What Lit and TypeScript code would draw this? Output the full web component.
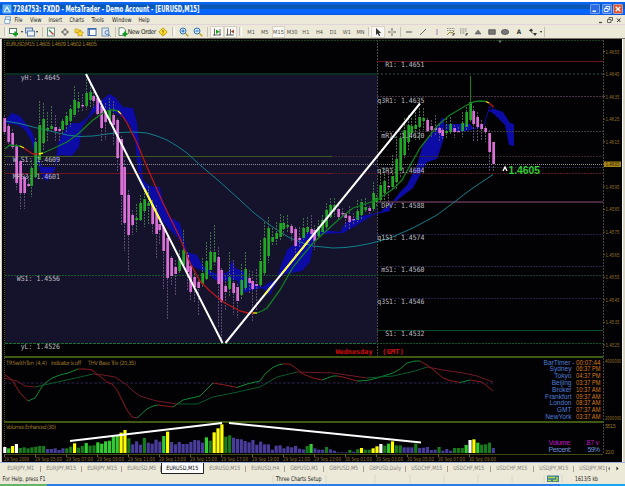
import { html, css, svg, LitElement } from 'lit';
import { customElement, property } from 'lit/decorators.js';

const STEP = 3.877;
const barX = (i: number) => 4.8 + i * STEP;

// high, body top, body bottom, low, 1 = up
const CANDLES: number[][] = [
  [115, 118, 132, 135, 0], [124, 126, 142, 146, 0], [129, 133, 147, 150, 0], [144, 146, 183, 190, 0],
  [160, 161, 193, 209, 0], [175, 177, 193, 209, 0], [176, 184, 186, 188, 0], [160, 168, 186, 197, 1],
  [138, 142, 177, 178, 1], [101, 125, 160, 166, 1], [103, 119, 143, 150, 1], [112, 128, 130, 141, 1],
  [106, 126, 129, 133, 1], [115, 127, 131, 142, 0], [127, 129, 131, 142, 0], [119, 121, 130, 133, 1],
  [112, 116, 125, 133, 1], [105, 109, 121, 127, 1], [86, 100, 115, 117, 1], [92, 102, 108, 112, 1],
  [94, 105, 106, 112, 0], [79, 93, 106, 110, 1], [84, 92, 100, 107, 1], [92, 96, 101, 108, 0],
  [95, 98, 114, 118, 0], [100, 106, 128, 141, 0], [103, 112, 122, 140, 0], [98, 110, 120, 124, 1],
  [101, 115, 125, 146, 0], [118, 120, 158, 171, 0], [136, 139, 195, 225, 0], [160, 167, 223, 251, 0],
  [190, 195, 235, 272, 0], [210, 215, 225, 235, 0], [204, 218, 220, 232, 1], [195, 203, 220, 222, 1],
  [187, 199, 211, 227, 1], [186, 203, 206, 224, 1], [200, 205, 224, 234, 0], [205, 213, 234, 259, 0],
  [218, 224, 230, 245, 0], [225, 227, 251, 289, 0], [236, 238, 278, 320, 0], [256, 258, 276, 285, 0],
  [260, 267, 274, 295, 0], [250, 258, 271, 273, 1], [230, 250, 265, 268, 1], [252, 255, 272, 290, 0],
  [262, 266, 292, 301, 0], [270, 277, 287, 303, 0], [277, 282, 288, 316, 0], [258, 273, 284, 288, 1],
  [242, 261, 279, 281, 1], [232, 252, 270, 273, 1], [225, 252, 262, 265, 1], [247, 257, 284, 327, 0],
  [268, 270, 302, 343, 0], [275, 286, 292, 310, 0], [252, 277, 289, 297, 1], [260, 283, 293, 315, 0],
  [284, 287, 301, 318, 0], [264, 280, 295, 300, 1], [252, 269, 288, 290, 1], [270, 278, 283, 293, 0],
  [271, 281, 289, 321, 0], [269, 284, 286, 311, 0], [240, 261, 285, 287, 1], [222, 238, 273, 275, 1],
  [217, 228, 256, 263, 1], [228, 237, 242, 246, 1], [222, 233, 239, 245, 1], [214, 223, 237, 240, 1],
  [216, 223, 229, 237, 1], [215, 225, 227, 232, 1], [224, 226, 233, 241, 0], [227, 229, 246, 260, 0],
  [227, 238, 240, 248, 0], [218, 228, 238, 240, 1], [217, 227, 232, 235, 1], [215, 229, 234, 237, 0],
  [225, 230, 241, 250, 0], [220, 226, 236, 238, 1], [215, 220, 232, 234, 1], [203, 210, 227, 229, 1],
  [198, 205, 217, 219, 1], [198, 205, 210, 217, 1], [205, 209, 217, 219, 0], [208, 213, 214, 217, 0],
  [213, 213, 218, 227, 0], [206, 216, 222, 230, 0], [213, 219, 220, 225, 0], [200, 211, 220, 222, 1],
  [199, 202, 215, 219, 1], [198, 207, 210, 213, 1], [206, 208, 211, 214, 0], [182, 193, 209, 211, 1],
  [195, 198, 202, 206, 1], [170, 185, 200, 202, 1], [168, 181, 193, 203, 1], [170, 186, 187, 205, 0],
  [155, 176, 187, 190, 1], [136, 159, 182, 190, 1], [133, 138, 171, 178, 1], [118, 130, 155, 158, 1],
  [115, 125, 142, 150, 1], [118, 126, 133, 138, 1], [112, 125, 129, 140, 1], [108, 117, 127, 140, 1],
  [108, 118, 121, 130, 1], [118, 120, 131, 133, 0], [120, 126, 130, 138, 0], [115, 128, 130, 135, 0],
  [124, 128, 133, 142, 0], [128, 130, 136, 140, 0], [118, 131, 133, 139, 1], [117, 124, 132, 135, 1],
  [125, 128, 132, 138, 0], [127, 131, 132, 133, 0], [112, 123, 131, 137, 1], [107, 112, 127, 130, 1],
  [76, 102, 120, 122, 1], [106, 111, 124, 142, 0], [112, 117, 127, 141, 0], [120, 124, 129, 140, 0],
  [126, 128, 132, 142, 0], [130, 133, 152, 171, 0], [142, 142, 164, 172, 0],
];

// height in thirds of a pixel followed by the colour key
const VOLUMES = (
  '18w 14l 21y 27w 15d 17d 14d 17d 19d 21d 21d 12b 12b 14b 9b 14b 14d 19d 29y 16d 21d 30l 22d 23d 32l 28l ' +
  '35l 37l 50l 53l 61y 69y 44d 26b 35b 25b 45d 31b 28b 40b 34b 51l 64y 33b 26b 33b 27b 27b 33b 39b 38b ' +
  '31b 47l 37d 62y 74y 86y 49d 53d 46b 42b 41b 36b 32b 39b 25b 34b 26b 26b 10b 22b 23b 14b 20b 17b 21b ' +
  '13b 11b 21d 27l 14b 10b 10b 18d 11b 7b 2b 2b 2b 9d 4b 11d 15y 10d 10d 14y 20y 27w 22d 28l 35y 23d ' +
  '23d 17b 17b 17b 28d 15b 16b 18b 9b 10b 18d 7b 12b 7b 15d 15d 15d 24l 39w 41y 31l 25d 26d 31d 15b'
).split(' ');

const VOL_COLORS: Record<string, string> = {
  w: '#ffffff', y: '#ffff00', l: '#32cd32', d: '#18791e', b: '#483d9b',
};

// y, colour, x1, x2, dash, width
const LEVELS: [number, string, number, number, string, number][] = [
  [74, '#0a2f20', 5, 377, '', 2],
  [74, '#1a3a36', 377, 603, '2 2', 1.4],
  [61.5, '#66141f', 377, 603, '', 1],
  [96.5, '#4b3448', 377, 603, '2 1', 1],
  [131.5, '#3e3a44', 377, 603, '2 1', 1],
  [156.5, '#3f5a1e', 5, 332, '', 1],
  [156.5, '#3b2a2c', 332, 603, '2 1', 1],
  [164.5, '#8d8b8e', 5, 603, '1 1', 1],
  [167.5, '#2a2444', 377, 603, '2 1', 1],
  [173.5, '#6e1722', 5, 332, '', 1],
  [173.5, '#5c1a22', 332, 603, '2 1', 1],
  [202, '#4a2740', 377, 603, '', 2],
  [234.5, '#25214a', 377, 603, '2 1', 1],
  [266.5, '#25284a', 377, 603, '2 1', 1],
  [275.5, '#145a28', 5, 377, '2 1', 1],
  [275.5, '#12402a', 377, 603, '2 1', 1],
  [298.5, '#25214a', 377, 603, '2 1', 1],
  [330.5, '#0f4a2c', 377, 603, '', 1],
  [343.5, '#147030', 5, 377, '3 1', 1],
  [343.5, '#125226', 377, 603, '2 1', 1],
];

const LABELS: [string, number, number][] = [
  ['yH: 1.4645', 60, 80], ['W S1: 1.4609', 60, 162], ['MPS3: 1.4601', 60, 179],
  ['WS1: 1.4556', 60, 281], ['yL: 1.4526', 60, 349],
  ['R1: 1.4651', 424.5, 67], ['q3R1: 1.4635', 424.5, 102.5], ['mR1: 1.4620', 424.5, 137.5],
  ['q1R1: 1.4604', 424.5, 173], ['DPV: 1.4588', 424.5, 208], ['q1S1: 1.4574', 424.5, 240],
  ['mS1: 1.4560', 424.5, 272], ['q3S1: 1.4546', 424.5, 304], ['S1: 1.4532', 424.5, 336],
];

const CLOUDS = [
  '5,123 8,117 12,113 20,116 27,125 32,132 36,143 39,160 42,167 55,167 55,170 47,181 43,178 37,162 31,140 25,130 18,125',
  '55,167 58,143 63,133 70,123 80,123 88,117 93,107 102,100 109,94 115,97 123,107 133,108 137,123 140,153 143,180 150,186 160,187 163,200 170,217 180,223 187,252 197,255 203,266 212,272 220,275 228,272 232,260 235,268 245,272 250,282 262,287 270,282 277,280 280,268 287,250 297,242 307,232 315,233 323,230 340,232 345,223 357,217 377,213 390,208 390,211 373,215 357,225 343,233 323,234 315,237 310,262 302,271 280,275 270,295 262,288 253,290 243,293 237,280 227,281 215,280 207,273 190,265 180,240 167,227 157,213 150,200 145,193 138,170 135,140 130,125 122,117 113,112 103,108 95,112 87,120 82,127 79,147 72,156 60,155',
  '380,211 390,205 400,192 407,185 417,165 423,145 437,127 442,118 444,118 444,138 437,159 427,162 420,175 413,188 400,198 387,210',
  '445,124 470,124 474,129 463,132 445,130',
  '489,110 495,109 503,112 510,123 514,124 514,146 509,145 505,125 497,117',
];

const MA: [string, string][] = [
  ['#128020', '5,149 10,145 20,146'],
  ['#ffee00', '20,146 24,148'],
  ['#b81818', '24,148 28,151 33,154 39,154'],
  ['#ffee00', '39,154 43,153'],
  ['#128020', '43,153 50,150 67,142 78,134 93,120 103,113 110,110 114,110 118,111'],
  ['#ffee00', '118,111 121,114'],
  ['#b81818', '121,114 127,123 137,143 147,167 163,203 180,238 190,263 200,281 210,291 223,302 240,311 248,313 253,313'],
  ['#ffee00', '253,313 257,313'],
  ['#128020', '257,313 262,311 267,308 280,290 293,267 313,243 337,221 353,208 365,204 377,200 393,189 402,180 407,171 420,148 437,126 450,115 467,105 475,101.5 481,101 486,101.5'],
  ['#ffee00', '486,101.5 489,103'],
  ['#b81818', '489,103 493.5,107'],
];

const SLOW_MA = '5,121 20,123.5 33,127 50,131 67,135 80,136.5 93,136 107,134 120,132.5 133,132 147,133 157,136 167,140 ' +
  '177,146 187,153 200,165 220,182 240,200 253,212 267,223 280,232 290,238 303,243 313,246 323,247 333,248 345,247.5 ' +
  '357,246 370,243.5 390,238 413,228 437,215 457,200 470,190 493,174.5';

const OSC: [string, string][] = [
  ['#8f1a1e', '4,374 12,380 20,393 28,401'],
  ['#0f8a34', '28,401 35,398 43,385 52,378 60,375 68,373 78,369'],
  ['#8f1a1e', '78,369 85,369 92,370 107,382 112,384 117,390 127,410 132,417 137,418'],
  ['#0f8a34', '137,418 147,409 153,406 158,405'],
  ['#8f1a1e', '158,405 173,407'],
  ['#0f8a34', '173,407 183,400 200,396 207,389 213,383'],
  ['#8f1a1e', '213,383 225,385 237,387.5'],
  ['#0f8a34', '237,387.5 247,384 260,381 265,374 272,368 278,365 283,364'],
  ['#8f1a1e', '283,364 290,364 297,369 303,374 313,378 322,380'],
  ['#0f8a34', '322,380 333,376 337,376'],
  ['#8f1a1e', '337,376 343,377 350,379 357,381'],
  ['#0f8a34', '357,381 367,380.5 377,378 393,373 400,369 407,363 415,361 420,361'],
  ['#8f1a1e', '420,361 430,367 443,378 450,380.5 460,382.5'],
  ['#0f8a34', '460,382.5 470,380'],
  ['#8f1a1e', '470,380 482,382 487,386 493,391'],
  ['#701a28', '4,378 17,381 25,386 35,387'],
  ['#0b5a2c', '35,387 53,383 80,377 93,374'],
  ['#701a28', '93,374 103,375 115,377 127,385 133,391 140,396 148,398.5 157,401 177,404'],
  ['#0b5a2c', '177,404 197,404 213,397 233,393 260,387 277,377 297,372'],
  ['#701a28', '297,372 333,373 350,375.5 367,378'],
  ['#0b5a2c', '367,378 393,376 415,371 427,367'],
  ['#701a28', '427,367 443,370 463,373 477,376 493,382'],
];

const CLOCKS = [
  ['BarTimer -', '00:07:44'], ['Sydney', '06:37 PM'], ['Tokyo', '04:37 PM'], ['Beijing', '03:37 PM'],
  ['Broker', '10:37 AM'], ['Frankfurt', '09:37 AM'], ['London', '08:37 AM'], ['GMT', '07:37 AM'],
  ['NewYork', '03:37 AM'],
];

const TIMES = [
  '29 Sep 2009', '29 Sep 05:00', '29 Sep 07:00', '29 Sep 09:00', '29 Sep 11:00', '29 Sep 13:00',
  '29 Sep 15:00', '29 Sep 17:00', '29 Sep 19:00', '29 Sep 21:00', '29 Sep 23:00', '30 Sep 01:00',
  '30 Sep 03:00', '30 Sep 05:00', '30 Sep 07:00', '30 Sep 09:00',
];

// label, cell width, text width
const TABS: [string, number, number][] = [
  ['EURJPY,M1', 39, 27], ['EURJPY,M15', 41, 30], ['EURJPY,M15', 40, 30], ['EURUSD,M5', 39, 29],
  ['EURUSD,M15', 43, 32], ['EURUSD,M15', 42, 31], ['EURUSD,H4', 39, 28], ['GBPUSD,M1', 39, 28],
  ['GBPUSD,M5', 40, 29], ['GBPUSD,Daily', 42, 32], ['USDCHF,M15', 42, 31], ['USDCHF,M15', 43, 31],
  ['USDCHF,M15', 43, 31], ['USDJPY,M15', 40, 29], ['USDJPY,M1', 33, 26],
];

const ICONS: Record<string, unknown> = {
  newchart: svg`<rect x=".5" y="1.5" width="7" height="5" fill="#fff" stroke="#5d7f6a"/><path d="M4 7h5M6.500 4.500v5" stroke="#0d9c20" stroke-width="2.200"/>`,
  profiles: svg`<rect x=".5" y="1" width="7" height="5" fill="#cfe0f2" stroke="#5a7ba8"/><rect x="2.500" y="4" width="7" height="5" fill="#eef5fc" stroke="#5a7ba8"/>`,
  market: svg`<rect x="1.500" y="1" width="7" height="8" fill="#fff" stroke="#6a8f88"/><path d="M3 3l2 2" stroke="#0a9a3a" stroke-width="1.500"/><path d="M5 5l2.500 2.500" stroke="#d03a2a" stroke-width="1.500"/>`,
  data: svg`<circle cx="5" cy="5" r="2.500" fill="none" stroke="#777"/><path d="M5 1v3M5 6v3M1 5h3M6 5h3" stroke="#666"/>`,
  navigator: svg`<path d="M1 2h3l1 1h2v3H1z" fill="#f4cf3a" stroke="#c39a1a" stroke-width=".6"/><path d="M6 3l1.200 2 2.300.3-1.600 1.700.4 2.200L6 8.200 4 9.200l.4-2.200L3 5.500l2.200-.4z" fill="#ffd92e" stroke="#b98b10" stroke-width=".6"/>`,
  terminal: svg`<rect x="1" y="1.500" width="8" height="7" fill="#fff" stroke="#3e6cae"/><path d="M1 2h8M2.300 2v6" stroke="#3e6cae" stroke-width="1.300"/>`,
  tester: svg`<rect x="1" y="1" width="6.500" height="8" fill="#dfe9f5" stroke="#7b94b8"/><circle cx="6" cy="5.500" r="2" fill="#cfe4fa" stroke="#4a73aa" stroke-width=".8"/><path d="M7.500 7l2 2.500" stroke="#4a73aa"/>`,
  order: svg`<path d="M1 .8h4.500L7.500 3v5.500H1z" fill="#fff" stroke="#6a8a74"/><path d="M4.500 7h5M7 4.500v5" stroke="#0d9c20" stroke-width="2.200"/>`,
  expert: svg`<path d="M5 .8L9.200 5 5 9.200.8 5z" fill="#ffe02a" stroke="#b08b00" stroke-width=".8"/><path d="M5 3v2.500M5 6.500v1" stroke="#6a5200"/>`,
  zoomin: svg`<circle cx="4" cy="4" r="3" fill="#d5eafc" stroke="#2e73bd"/><path d="M2.500 4h3M4 2.500v3" stroke="#1a5fb0"/><path d="M6.300 6.300l3 3" stroke="#c2a321" stroke-width="1.600"/>`,
  zoomout: svg`<circle cx="4" cy="4" r="3" fill="#d5eafc" stroke="#2e73bd"/><path d="M2.500 4h3" stroke="#1a5fb0"/><path d="M6.300 6.300l3 3" stroke="#c2a321" stroke-width="1.600"/>`,
  scroll: svg`<path d="M2.500 1.500v7M1 8h8M8 2v6" stroke="#555" stroke-width=".9"/><path d="M4 2.500L7.500 4.800 4 7z" fill="#0fa01e"/>`,
  shift: svg`<path d="M2.500 1.500v7M1 8h8M5.500 2v6" stroke="#555" stroke-width=".9"/><path d="M9 2.500L6 4.500 9 6.500z" fill="#a5422d"/>`,
  cursor: svg`<path d="M3 1v7l1.700-1.500L6 9.200l1.200-.6L6 6h2.200z" fill="#333"/>`,
  cross: svg`<path d="M5 1v3.200M5 5.800V9M1 5h3.200M5.800 5H9" stroke="#666"/>`,
  hline: svg`<path d="M2 5h6" stroke="#555"/>`,
  trend: svg`<path d="M2 8l6-6" stroke="#666"/>`,
  vline: svg`<path d="M5 2v6" stroke="#a080b4"/>`,
  fibo: svg`<path d="M1 1.500h8M1 3.500h8" stroke="#777" stroke-dasharray="1 .6" stroke-width=".8"/><path d="M1 8l3-3 2 1 2-2" stroke="#8d8430" fill="none"/><path d="M7 9V6.500h2M7 7.700h1.500" stroke="#444" fill="none" stroke-width=".8"/>`,
  levels: svg`<path d="M1 2h7M1 4h7M1 6h5" stroke="#777" stroke-dasharray="1 .6" stroke-width=".9"/><path d="M7 9V6.500h2M7 7.700h1.500" stroke="#444" fill="none" stroke-width=".8"/>`,
  triangle: svg`<path d="M5 3L8 7H2z" fill="#777" stroke="#555" stroke-width=".6"/>`,
  rect: svg`<rect x="1.800" y="2.800" width="6.400" height="4.400" fill="#777" stroke="#4c4c4c" stroke-width=".8"/>`,
  ellipse: svg`<ellipse cx="5" cy="5" rx="3.700" ry="2.500" fill="#777" stroke="#4c4c4c" stroke-width=".8"/>`,
  arrows: svg`<path d="M1 3.500L3.200 1.500 5 3.500 3.200 5z" fill="#333"/><path d="M5 6h4L7 9z" fill="#333"/><path d="M3 5l3 2" stroke="#777"/>`,
};

@customElement('tool-icon')
class ToolIcon extends LitElement {
  static styles = css`
    :host { display: flex; justify-content: center; align-items: center; height: 12px; }
    svg { display: block; width: 10px; height: 10px; }
  `;

  @property() name = '';

  render() {
    return html`<svg viewBox="0 0 10 10" fill="none">${ICONS[this.name]}</svg>`;
  }
}

@customElement('tool-bar')
class ToolBar extends LitElement {
  static styles = css`
    :host {
      display: flex;
      align-items: center;
      height: 14px;
      padding-left: 4px;
      box-sizing: border-box;
      background: #ece9d8;
      border-top: 1px solid #e2d3da;
      font: 6.3px "DejaVu Sans Condensed", "DejaVu Sans", sans-serif;
      color: #333;
    }
    .cell { display: flex; flex: none; width: 13.7px; justify-content: center; align-items: center; height: 12px; }
    .group { display: flex; flex: none; align-items: center; }
    .grip { flex: none; width: 3px; height: 9px; border-left: 1px solid #cbbfc4; border-right: 1px solid #fff; box-sizing: border-box; }
    .sep { flex: none; width: 1px; height: 10px; background: #c6c0b2; }
    .before-market { margin: 0 1px 0 4px; }
    .before-order { margin-left: 2px; }
    .before-zoom { margin: 0 3px 0 2px; }
    .before-scroll { margin: 0 2px; }
    .before-lines { margin: 0 1.5px; }
    .drop { width: 0; height: 0; border: 1.5px solid transparent; border-top: 2px solid #222; border-bottom: 0; }
    .pressed { background: #f8f7f1; box-shadow: inset 0 0 0 1px #d8d2c6; }
    .frames { margin-left: 2px; width: 124px; }
    .tf { color: #55524c; font-size: 5.6px; }
    .order { display: flex; flex: none; width: 38px; align-items: center; margin-left: 2px; font-size: 6.5px; letter-spacing: -0.36px; white-space: nowrap; color: #222; }
  `;

  render() {
    const cell = (name: string, pressed = false) => html`
      <div class="cell ${pressed ? 'pressed' : ''}"><tool-icon name=${name}></tool-icon></div>`;
    return html`
      <div class="grip"></div>
      <div class="group">${cell('newchart')}<i class="drop"></i></div>
      <div class="group">${cell('profiles')}<i class="drop"></i></div>
      <div class="sep before-market"></div>
      ${['market', 'data', 'navigator', 'terminal', 'tester'].map(n => cell(n))}
      <div class="sep before-order"></div>
      <div class="order"><tool-icon name="order"></tool-icon><span>New Order</span></div>
      ${cell('expert')}
      <div class="grip before-zoom"></div>
      ${cell('zoomin')}${cell('zoomout')}
      <div class="sep before-scroll"></div>
      ${cell('scroll', true)}${cell('shift', true)}
      <div class="grip before-order"></div>
      <div class="group frames">
        ${['M1', 'M5', 'M15', 'M30', 'H1', 'H4', 'D1', 'W1', 'MN'].map(t => html`
          <div class="cell tf ${t === 'M15' ? 'pressed' : ''}">${t}</div>`)}
      </div>
      <div class="grip"></div>
      ${cell('cursor', true)}${cell('cross')}
      <div class="sep before-lines"></div>
      ${['hline', 'trend', 'vline', 'fibo', 'levels', 'triangle', 'rect', 'ellipse'].map(n => cell(n))}
      <div class="cell"><b>A</b></div>
      ${cell('arrows')}<i class="drop"></i>
      <div class="sep before-order"></div>
    `;
  }
}

@customElement('price-chart')
class PriceChart extends LitElement {
  static styles = css`
    :host { display: block; background: #020103; }
    svg { display: block; width: 620px; height: 424px; }
    .label { font: 7.2px "DejaVu Sans Mono", monospace; fill: #bdbcc2; text-anchor: end; }
    .axis { font: 5.6px "DejaVu Sans Condensed", sans-serif; fill: #95722a; }
    .current { fill: #2a2004; }
    .caption { font: 5.8px "DejaVu Sans Condensed", sans-serif; fill: #95742a; }
    .quote { font: bold 10px "Liberation Sans", sans-serif; fill: #32cd32; }
    .day { font: bold 6.9px "DejaVu Sans Mono", monospace; fill: #d40d0d; }
    .city { font: 6.6px "Liberation Sans", sans-serif; fill: #4d7fd8; text-anchor: end; }
    .clock { font: 6.8px "Liberation Sans", sans-serif; fill: #d97a18; }
    .volume { font: 7px "Liberation Sans", sans-serif; fill: #c214c2; }
    .percent { font: 7px "Liberation Sans", sans-serif; fill: #6a90d8; }
  `;

  _frame() {
    return svg`
      <rect x="5" y="74" width="372.500" height="269.500" fill="#15122b"/>
      <path d="M4.500 40V454" stroke="#5a4a16" stroke-dasharray="1 1"/>
      <path d="M377.500 40V356" stroke="#4a4750" stroke-dasharray="2 1"/>
      <path d="M4 40.500H603" stroke="#1e5a1c" stroke-dasharray="2 1" stroke-width=".7"/>
      <path d="M603.500 40V454" stroke="#4a4440" stroke-dasharray="2 1"/>
      ${[357, 422].map(y => svg`
        <path d="M4 ${y}H603" stroke="#5e480e" stroke-width="2"/>
        <path d="M4 ${y}H603" stroke="#1f6a18" stroke-width="2" stroke-dasharray="1 1"/>`)}
      <path d="M4 454.500H603" stroke="#3f4a14"/>
      <path d="M498 40.500h4l-2 2.500z" fill="#777"/>
    `;
  }

  _main() {
    return svg`
      ${CLOUDS.map(p => svg`<polygon points=${p} fill="#0d0ba6"/>`)}
      <polyline points="474,129 484,125 487,115 490,106 493,109 489,112" fill="none" stroke="#0d0ba6"/>
      ${LEVELS.map(([y, c, x1, x2, dash, w]) => svg`
        <line x1=${x1} x2=${x2} y1=${y} y2=${y} stroke=${c} stroke-width=${w} stroke-dasharray=${dash || 'none'}/>`)}
      <polyline points=${SLOW_MA} fill="none" stroke="#11808a"/>
      ${CANDLES.map(([hi, top, bottom, lo, up], i) => {
        const x = Math.round(barX(i) - 0.5);
        return svg`
          <line x1=${x + 0.5} x2=${x + 0.5} y1=${hi} y2=${lo} stroke=${i === 120 ? '#147d1a' : up ? '#3f7045' : '#5e4a70'} stroke-dasharray=${i === 120 ? 'none' : '2 1'}/>
          <rect x=${x - 0.7} y=${top} width="2.700" height=${Math.max(1.3, bottom - top)} fill=${up ? '#22a626' : '#da70d6'}/>`;
      })}
      ${MA.map(([c, p]) => svg`<polyline points=${p} fill="none" stroke=${c} stroke-width="1.300"/>`)}
      <path d="M86 74L222.500 343M225.500 343L420 103.500" stroke="#fff" stroke-width="2"/>
      <path d="M144.500 189L160 219.500M265 294.500L270.500 287.500M282 273.500L309 240" stroke="#ffff20" stroke-width="1.700"/>
      ${LABELS.map(([t, x, y]) => svg`
        <text class="label" x=${x} y=${y} textLength=${t.length * 3.93} lengthAdjust="spacingAndGlyphs">${t}</text>`)}
      <text class="caption" x="6" y="45.500" textLength="91">EURUSD,M15  1.4605 1.4609 1.4602 1.4605</text>
      <path d="M503 171L505 167L507 171" fill="none" stroke="#fff" stroke-width="1.400"/>
      <text class="quote" x="508.500" y="173.500" textLength="31.500" lengthAdjust="spacingAndGlyphs">1.4605</text>
      <text class="day" x="335.500" y="354" textLength="37" lengthAdjust="spacingAndGlyphs">Wednesday</text>
      <text class="day" x="382" y="354" textLength="22" lengthAdjust="spacingAndGlyphs">(GMT)</text>
    `;
  }

  _axis() {
    const rows = Array.from({ length: 14 }, (_, i) => ({
      y: 51.5 + i * 22.57,
      text: (1.4655 - i * 0.001).toFixed(4),
    }));
    return svg`
      ${rows.map((r, i) => svg`
        <path d="M603 ${r.y}h2" stroke="#6a5a30"/>
        ${i === 5 ? svg`<rect x="604" y="161.500" width="17" height="5.500" fill="#a8861a"/>` : ''}
        <text class="axis ${i === 5 ? 'current' : ''}" x="605.500" y=${r.y + 2} textLength="14" lengthAdjust="spacingAndGlyphs">${r.text}</text>`)}
      <text class="axis" x="605" y="363" textLength="16" lengthAdjust="spacingAndGlyphs">4000000</text>
      <text class="axis" x="605" y="420" textLength="16" lengthAdjust="spacingAndGlyphs">2000000</text>
      <text class="axis" x="605" y="427.500" textLength="11">551.5</text>
      <text class="axis" x="605" y="454" textLength="9">22.0</text>
    `;
  }

  _indicators() {
    return svg`
      <path d="M4 383H493" stroke="#29264c" stroke-dasharray="3 1.500"/>
      ${OSC.map(([c, p]) => svg`<polyline points=${p} fill="none" stroke=${c}/>`)}
      <text class="caption" x="6" y="364.500" textLength="41">TRSwithTen  (4,4)</text>
      <text class="caption" x="51" y="364.500" textLength="30">Indicator is off</text>
      <text class="caption" x="88" y="364.500" textLength="48">THV Base Trix  (20,35)</text>
      ${CLOCKS.map(([city, time], i) => svg`
        <text class="city" x=${i ? 571.5 : 574.5} y=${364.5 + i * 6.8}>${city}</text>
        <text class="clock" x="576" y=${364.5 + i * 6.8} textLength="24.500" lengthAdjust="spacingAndGlyphs">${time}</text>`)}
    `;
  }

  _volumes() {
    return svg`
      ${VOLUMES.map((v, i) => {
        const h = parseInt(v, 10) / 3;
        return svg`<rect x=${barX(i) - 1.6} y=${453 - h} width="3.200" height=${h} fill=${VOL_COLORS[v.slice(-1)]}/>`;
      })}
      <path d="M70 441L222 423M229 423L421 442.500" stroke="#fff" stroke-width="2"/>
      <text class="caption" x="6" y="429" textLength="50">Volumes Enhanced  (30)</text>
      <text class="volume" x="548.500" y="445" textLength="23">Volume:</text>
      <text class="volume" x="586.500" y="445" textLength="12.500">87 v</text>
      <text class="percent" x="548.500" y="452.300" textLength="23">Percent:</text>
      <text class="percent" x="587.500" y="452.300" textLength="12.500">59%</text>
      ${TIMES.map((t, i) => svg`
        <path d="M${4.5 + i * 31} 454v3" stroke="#6a5a30"/>
        <text class="axis" x=${4 + i * 31} y="461.300" textLength=${i ? 27 : 25} lengthAdjust="spacingAndGlyphs">${t}</text>`)}
    `;
  }

  render() {
    return html`
      <svg viewBox="2 39 620 424">
        ${this._frame()}
        ${this._main()}
        ${this._axis()}
        ${this._indicators()}
        ${this._volumes()}
      </svg>
    `;
  }
}

@customElement('app-root')
class AppRoot extends LitElement {
  static styles = css`
    :host {
      display: flex;
      flex-direction: column;
      width: 625px;
      height: 486px;
      overflow: hidden;
      background: #ece9d8;
      font-family: "DejaVu Sans Condensed", "DejaVu Sans", sans-serif;
      color: #222;
    }
    .title {
      display: flex;
      align-items: center;
      flex: none;
      box-sizing: border-box;
      height: 15px;
      padding: 0 2px 0 2px;
      border-top: 2px solid #fff;
      background: linear-gradient(#0a66f0 0, #0a66f0 15%, #0b58b4 22%, #0b58b4 50%, #0566ff 56%, #0566ff 92%, #0a4cc0 100%);
    }
    .title svg { width: 10px; height: 10px; }
    .title svg.caption { width: 200px; height: 12px; overflow: visible; }
    .buttons { display: flex; gap: 1.5px; margin-left: auto; }
    .buttons svg { width: 10px; height: 10px; }
    .menu { display: flex; align-items: center; flex: none; height: 9px; padding-left: 4px; }
    .menu svg { width: 8px; height: 8px; }
    .menu .items { width: 160px; height: 9px; }
    .menu .wins { margin-left: auto; width: 35px; height: 8px; }
    .body { display: flex; flex: none; height: 424px; border-top: 1px solid #77736a; box-sizing: border-box; }
    .edge { width: 2px; background: linear-gradient(90deg, #f4f1ea 60%, #8f8b80); }
    .right { width: 3px; background: linear-gradient(90deg, #fff 33%, #d8d2c0 33%); }
    .tabs { display: flex; flex: none; height: 12px; padding-left: 2px; border-top: 1px solid #9db2d8; box-sizing: border-box; }
    .tabs svg { display: block; flex: none; height: 11px; overflow: visible; }
    .status { display: flex; align-items: center; flex: none; height: 10px; }
    .status svg { display: block; width: 625px; height: 10px; }
    .task { flex: none; height: 2px; background: linear-gradient(90deg, #66b266 0, #66b266 47px, #2a7ce8 47px, #2a7ce8 560px, #16a4f4 560px); }
    text { font: 6.4px "DejaVu Sans Condensed", sans-serif; fill: #222; }
    .cap { font: bold 8px "DejaVu Sans Condensed", sans-serif; fill: #fff; }
    .off { font-size: 6px; fill: #858178; }
    .on { font-size: 6px; fill: #000; }
  `;

  _tab([label, width, textWidth]: [string, number, number], active: boolean) {
    return html`
      <svg width=${width} viewBox="0 0 ${width} 11">
        ${active
          ? svg`<path d="M.5 0V10.500H${width - 0.5}V0" fill="#fff" stroke="#222"/>`
          : svg`<path d="M${width - 0.5} 3v6" stroke="#9a8b80" stroke-width=".8"/>`}
        <text class=${active ? 'on' : 'off'} x="5.200" y="7.300" textLength=${textWidth} lengthAdjust="spacingAndGlyphs">${label}</text>
      </svg>`;
  }

  render() {
    const menu: [string, number, number][] = [
      ['File', 14.5, 8], ['View', 30, 11.5], ['Insert', 48.5, 13.5], ['Charts', 69.5, 14.5],
      ['Tools', 91.5, 12.5], ['Window', 112, 19.5], ['Help', 138.5, 11],
    ];
    return html`
      <div class="title">
        <svg viewBox="0 0 10 10">
          <rect x=".5" y=".5" width="9" height="9" rx="1" fill="#5fb0f4"/>
          <path d="M1.500 8L5 2l3.500 6z" fill="#e8f6ff"/><path d="M3 7.500h4L5 4.500z" fill="#3f92dc"/>
        </svg>
        <svg class="caption" viewBox="0 0 200 12">
          <text class="cap" x="1" y="9" textLength="186.500" lengthAdjust="spacingAndGlyphs">7284753: FXDD - MetaTrader - Demo Account - [EURUSD,M15]</text>
        </svg>
        <div class="buttons">
          <svg viewBox="0 0 10 10"><rect x=".4" y=".4" width="9.200" height="9.200" rx="1" fill="#2a6ae4" stroke="#a9c8fa" stroke-width=".7"/><path d="M2.500 7.200h3.500" stroke="#fff" stroke-width="1.400"/></svg>
          <svg viewBox="0 0 10 10"><rect x=".4" y=".4" width="9.200" height="9.200" rx="1" fill="#3a78ea" stroke="#a9c8fa" stroke-width=".7"/><path d="M4 4V2.500h3.700v3.300H6.500M2.400 4.500h3.700v3H2.400z" fill="none" stroke="#fff" stroke-width=".9"/></svg>
          <svg viewBox="0 0 10 10"><rect x=".4" y=".4" width="9.200" height="9.200" rx="1" fill="#dc5430" stroke="#f4c8bc" stroke-width=".7"/><path d="M2.700 2.700l4.600 4.600M7.300 2.700L2.700 7.300" stroke="#fff" stroke-width="1.300"/></svg>
        </div>
      </div>
      <div class="menu">
        <svg viewBox="0 0 8 8"><rect x="1.500" y=".8" width="5" height="4" fill="#e4f0fb" stroke="#6c96c8" stroke-width=".8"/><rect x=".8" y="3.300" width="5" height="4" fill="#fff" stroke="#6c96c8" stroke-width=".8"/></svg>
        <svg class="items" viewBox="12 0 160 9">
          ${menu.map(([t, x, w]) => svg`<text x=${x} y="7" textLength=${w} lengthAdjust="spacingAndGlyphs">${t}</text>`)}
        </svg>
        <svg class="wins" viewBox="0 0 35 8">
          <path d="M9 6.500h3" stroke="#444" stroke-width="1.200"/>
          <path d="M19 3V1.500h3.500V4.500h-1M17.500 3.500H21v3h-3.500z" fill="none" stroke="#444" stroke-width=".8"/>
          <path d="M27 2.500l3.500 3.500M30.500 2.500L27 6" stroke="#333"/>
        </svg>
      </div>
      <tool-bar></tool-bar>
      <div class="body">
        <div class="edge"></div>
        <price-chart></price-chart>
        <div class="right"></div>
      </div>
      <div class="tabs">
        ${TABS.map((t, i) => this._tab(t, i === 4))}
        <svg width="16" viewBox="0 0 16 11"><path d="M3 3.500v4l-2-2z" fill="#777"/><path d="M9.500 3.500v4l2-2z" fill="#222"/></svg>
      </div>
      <div class="status">
        <svg viewBox="0 0 625 10">
          <text x="2.500" y="6.800" textLength="43" lengthAdjust="spacingAndGlyphs">For Help, press F1</text>
          ${[273, 326, 375, 410, 444, 478, 512, 544, 562].map(x => svg`<path d="M${x} 1v8" stroke="#d6cfc8" stroke-width=".8"/>`)}
          <text x="276" y="6.800" textLength="45.500" lengthAdjust="spacingAndGlyphs">Three Charts Setup</text>
          <rect x="547" y="1.500" width="12" height="6.500" fill="#3f7fa0"/>
          <path d="M548 3.500h7M548 6.500h3M553 6.500h3M557 3v4" stroke="#b6dc3a" stroke-width="1.500"/>
          <text x="575" y="6.800" textLength="23" lengthAdjust="spacingAndGlyphs">1613/5 kb</text>
        </svg>
      </div>
      <div class="task"></div>
    `;
  }
}
